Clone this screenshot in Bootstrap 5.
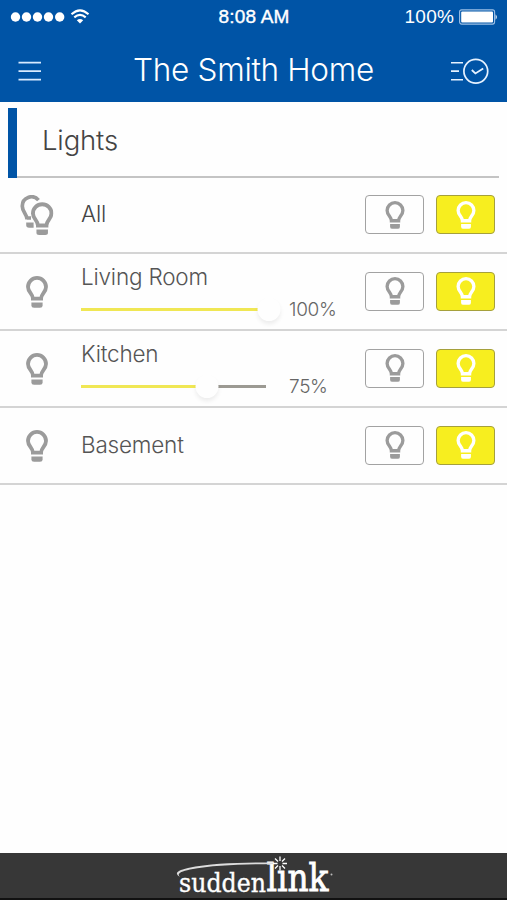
<!DOCTYPE html>
<html lang="en">
<head>
<meta charset="utf-8">
<meta name="viewport" content="width=device-width, initial-scale=1">
<title>The Smith Home</title>
<link href="https://cdn.jsdelivr.net/npm/bootstrap@5.3.0/dist/css/bootstrap.min.css" rel="stylesheet">
<style>
body{font-family:Inter,"Liberation Sans",sans-serif;font-weight:300;color:#555;background:#fefefe;height:900px;overflow:hidden}
svg{display:block;flex:none}
.top-bar{background:#0054a6;height:102px;color:#fff}
.status{height:34px;padding:0 9px 0 10px;font-size:17.5px;line-height:34px}
.clock{font-family:"Liberation Sans",sans-serif;font-weight:400;font-size:19px;letter-spacing:.2px;-webkit-text-stroke:.4px #fff}
.batt-text{font-family:"Liberation Sans",sans-serif;font-weight:400;font-size:19px;letter-spacing:.2px}
.side{width:33.33%}
.title-row{height:68px;padding:6px 18px 0}
.title{font-size:31.5px;letter-spacing:-.3px;line-height:62px;padding-bottom:3px}
.section-head{margin:6px 8px 0;height:70px;border-left:9px solid #0054a6}
.section-inner{height:70px;border-bottom:2px solid #c4c4c4;padding-left:25px;font-size:27.5px;letter-spacing:-.15px;line-height:65px;color:#444}
.light-row{height:77px;border-bottom:2px solid #d4d4d4;padding-right:12px}
.first-row{height:76px}
.lamp{width:81px;padding-left:20px;color:#9b9b9b}
.single{padding-left:26px}
.lamp-name{font-size:22.5px;letter-spacing:-.2px;line-height:28px}
.slider-name{line-height:30px;height:28px}
.solo-name{padding-bottom:2px}
.all-name{color:#444}
.slider-line{height:24px;margin-top:7px}
.track{width:185px;height:3px;border-radius:0;background:#9c9a93;overflow:visible}
.track .progress-bar{background:#f0e754;height:3px}
.knob{width:23px;height:23px;border-radius:50%;background:#fefefe;top:-10px;transform:translateX(-50%);box-shadow:0 3px 4px rgba(0,0,0,.07)}
.pct{font-size:19px;letter-spacing:-.3px;margin-left:23px;padding-top:2px;line-height:24px;color:#666}
.light-btn{width:59px;height:39px;padding:0;border:1.5px solid #a2a2a2;border-radius:4px;background:#fefefe;color:#9b9b9b}
.light-on{background:#f7ee1f;border-color:#a5a03c;color:#fff}
.switches{gap:12px;padding-bottom:1px}
.brand-bar{background:#373737;height:47px;border-bottom:2px solid #111}
.brand-bar svg{overflow:visible}
</style>
<script src="https://cdn.jsdelivr.net/npm/bootstrap@5.3.0/dist/js/bootstrap.bundle.min.js"></script>
</head>
<body class="d-flex flex-column">
<svg width="0" height="0" class="position-absolute">
  <defs>
    <symbol id="bulb" viewBox="0 0 22 32">
      <path d="M6.9 22.6C6.9 17.8 2 16.4 2 10.9A9 9 0 0 1 20 10.9C20 16.4 15.1 17.8 15.1 22.6Z" fill="none" stroke="currentColor" stroke-width="3.8"/>
      <path d="M5.4 26.4H16.6V29.6Q16.6 31.8 14 31.8H8Q5.4 31.8 5.4 29.6Z" fill="currentColor"/>
    </symbol>
  </defs>
</svg>

<header class="top-bar">
  <div class="status d-flex align-items-center">
    <div class="side d-flex align-items-center">
      <svg width="82" height="20" viewBox="0 0 82 20">
        <g fill="#fff"><circle cx="5.5" cy="10" r="4.7"/><circle cx="16.5" cy="10" r="4.7"/><circle cx="27.5" cy="10" r="4.7"/><circle cx="38.5" cy="10" r="4.7"/><circle cx="49.7" cy="10" r="4.7"/><path d="M70 16.5L66.8 13.3Q70 10.9 73.2 13.3Z"/></g>
        <path d="M61.5 7.2Q70 -.6 78.5 7.2M64.3 10.4Q70 5.4 75.7 10.4" fill="none" stroke="#fff" stroke-width="2.1"/>
      </svg>
    </div>
    <div class="clock text-center flex-fill text-nowrap">8:08 AM</div>
    <div class="side d-flex align-items-center justify-content-end">
      <span class="batt-text me-1">100%</span>
      <svg width="40" height="16" viewBox="0 0 40 16">
        <rect x="1.6" y=".9" width="35" height="14.2" rx="2" fill="none" stroke="#9cc0e6" stroke-width="1.1"/>
        <rect x="3.2" y="2.4" width="31.8" height="11.2" rx="1" fill="#fff"/>
        <path d="M37.6 5.2Q40 8 37.6 10.8Z" fill="#fff"/>
      </svg>
    </div>
  </div>
  <div class="title-row d-flex align-items-center justify-content-between">
    <svg width="40" height="24" viewBox="0 0 40 24"><path d="M.5 3.7H23M.5 12.1H23M.5 20.7H23" stroke="#d8eaff" stroke-width="1.7"/></svg>
    <div class="title">The Smith Home</div>
    <svg width="40" height="28" viewBox="0 0 40 28" fill="none" stroke="#e6f2ff">
      <path d="M2 5.7H14M2 14.1H10M2 22.7H14" stroke-width="1.6"/>
      <circle cx="26.8" cy="14.2" r="11.9" stroke-width="1.7"/>
      <path d="M22.8 13L26.4 16.4L34.2 11.5" stroke-width="1.8"/>
    </svg>
  </div>
</header>

<main class="flex-fill">
  <div class="section-head"><div class="section-inner">Lights</div></div>

  <div class="light-row first-row d-flex align-items-center">
    <div class="lamp">
      <svg width="34" height="41" viewBox="0 0 34 41">
        <path d="M7.1 24.6C7.1 18.8 2.3 17 2.3 11.3A9.2 9.2 0 0 1 18.5 5.1M7 23H11" fill="none" stroke="currentColor" stroke-width="3.7"/>
        <path d="M6.2 27.5H13.6V32.7H9Q6.2 32.7 6.2 30Z" fill="currentColor"/>
        <use href="#bulb" x="10.9" y="7" width="22.6" height="33.4"/>
      </svg>
    </div>
    <div class="flex-fill lamp-name solo-name all-name">All</div>
    <div class="switches d-flex">
      <button class="btn light-btn d-flex align-items-center justify-content-center" aria-label="Off"><svg width="20" height="28"><use href="#bulb"/></svg></button>
      <button class="btn light-btn light-on d-flex align-items-center justify-content-center" aria-label="On"><svg width="20" height="28"><use href="#bulb"/></svg></button>
    </div>
  </div>

  <div class="light-row d-flex align-items-center">
    <div class="lamp single"><svg width="22" height="32"><use href="#bulb"/></svg></div>
    <div class="flex-fill">
      <div class="lamp-name slider-name">Living Room</div>
      <div class="slider-line d-flex align-items-center">
        <div class="progress track position-relative"><div class="progress-bar" style="width:100%"></div><span class="knob position-absolute" style="left:101.5%"></span></div>
        <span class="pct">100%</span>
      </div>
    </div>
    <div class="switches d-flex">
      <button class="btn light-btn d-flex align-items-center justify-content-center" aria-label="Off"><svg width="20" height="28"><use href="#bulb"/></svg></button>
      <button class="btn light-btn light-on d-flex align-items-center justify-content-center" aria-label="On"><svg width="20" height="28"><use href="#bulb"/></svg></button>
    </div>
  </div>

  <div class="light-row d-flex align-items-center">
    <div class="lamp single"><svg width="22" height="32"><use href="#bulb"/></svg></div>
    <div class="flex-fill">
      <div class="lamp-name slider-name">Kitchen</div>
      <div class="slider-line d-flex align-items-center">
        <div class="progress track position-relative"><div class="progress-bar" style="width:68%"></div><span class="knob position-absolute" style="left:68.3%"></span></div>
        <span class="pct">75%</span>
      </div>
    </div>
    <div class="switches d-flex">
      <button class="btn light-btn d-flex align-items-center justify-content-center" aria-label="Off"><svg width="20" height="28"><use href="#bulb"/></svg></button>
      <button class="btn light-btn light-on d-flex align-items-center justify-content-center" aria-label="On"><svg width="20" height="28"><use href="#bulb"/></svg></button>
    </div>
  </div>

  <div class="light-row d-flex align-items-center">
    <div class="lamp single"><svg width="22" height="32"><use href="#bulb"/></svg></div>
    <div class="flex-fill lamp-name solo-name">Basement</div>
    <div class="switches d-flex">
      <button class="btn light-btn d-flex align-items-center justify-content-center" aria-label="Off"><svg width="20" height="28"><use href="#bulb"/></svg></button>
      <button class="btn light-btn light-on d-flex align-items-center justify-content-center" aria-label="On"><svg width="20" height="28"><use href="#bulb"/></svg></button>
    </div>
  </div>
</main>

<footer class="brand-bar d-flex justify-content-center">
  <svg width="160" height="45" viewBox="0 0 160 45" fill="#fff">
    <text x="5" y="38.5" font-family="DejaVu Serif, serif" font-size="26" textLength="87" lengthAdjust="spacingAndGlyphs" stroke="#fff" stroke-width=".35">sudden</text>
    <text x="92.5" y="38" font-family="DejaVu Serif, serif" font-size="39" textLength="62" lengthAdjust="spacingAndGlyphs" stroke="#fff" stroke-width=".9">lınk</text>
    <path d="M6 24C1 21 1 18 14 15C38 10 66 9.5 100 9.5V11C66 11.5 40 12 16 16.5C5 19 3 21 6 24Z" fill="#ddd"/>
    <path d="M106 3.5V8M106 13V17.5M99 10.500H103.500M108.500 10.500H113M101 5.500L104 8.500M108 12.500L111 15.500M111 5.500L108 8.500M104 12.500L101 15.500" stroke="#fff" stroke-width="1.3"/>
    <circle cx="157.5" cy="21.5" r="1" fill="#bbb"/>
  </svg>
</footer>
</body>
</html>
